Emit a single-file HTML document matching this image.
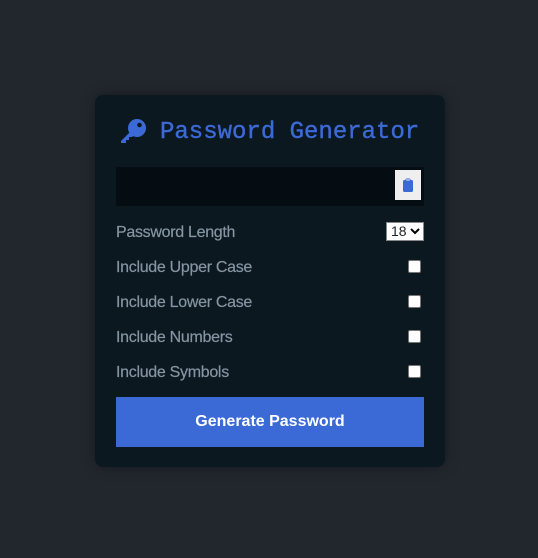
<!DOCTYPE html>
<html><head><meta charset="utf-8"><style>
html,body{margin:0;padding:0;width:538px;height:558px;background:#22272e;overflow:hidden;font-family:"Liberation Sans",sans-serif}
.card{position:absolute;left:95px;top:95px;width:350px;height:372px;background:#0c1820;border-radius:8px;box-shadow:0 0 14px rgba(0,0,0,.35)}
.title{position:absolute;left:160px;top:119px;font-family:"Liberation Mono",monospace;font-size:24px;color:#3b6ad6;white-space:nowrap;-webkit-text-stroke:0.4px #3b6ad6}
.key{position:absolute;left:118px;top:115px}
.inp{position:absolute;left:116px;top:167px;width:308px;height:39px;background:#060d12}
.clip{position:absolute;left:395px;top:170px;width:26px;height:30px;background:#efefef}
.lbl{position:absolute;left:116px;font-size:16px;color:#8595a1;letter-spacing:-0.3px;-webkit-text-stroke:0.2px #8595a1}
.cb{position:absolute;left:408px;width:11px;height:11px;background:#fff;border:1px solid #777;border-radius:2px}
.sel{position:absolute;left:386px;top:222px;width:36px;height:17px;background:#fff;border:1px solid #888;font-size:14px;line-height:17px}
.btn{position:absolute;left:116px;top:397px;width:308px;height:50px;background:#3b6ad6;color:#fff;font-weight:bold;font-size:16px;text-align:center;line-height:50px}
</style></head><body>
<div class="card"></div>
<svg class="key" width="30" height="30" viewBox="0 0 30 30"><circle cx="19" cy="13" r="9" fill="#3b6ad6"/><circle cx="21.5" cy="10" r="2.3" fill="#0c1820"/><path d="M14 15 L3 26 L3 28 L8 28 L8 25 L11 25 L11 22 L14 22 L18 18 Z" fill="#3b6ad6"/></svg>
<div class="title">Password Generator</div>
<div class="inp"></div>
<div class="clip"><svg width="26" height="30" viewBox="0 0 26 30"><rect x="8" y="10" width="10" height="12" rx="1.5" fill="#3b6ad6"/><rect x="10.5" y="8.5" width="5" height="3" rx="1" fill="#3b6ad6"/><rect x="11" y="9.5" width="4" height="1" fill="#efefef"/></svg></div>
<div class="lbl" style="top:224px">Password Length</div>
<div class="sel"><span style="margin-left:4px;color:#222">18</span><svg style="position:absolute;left:23px;top:5px" width="10" height="7" viewBox="0 0 10 7"><path d="M1 1 L5 5 L9 1" stroke="#000" stroke-width="2" fill="none"/></svg></div>
<div class="lbl" style="top:259px">Include Upper Case</div><div class="cb" style="top:260px"></div>
<div class="lbl" style="top:294px">Include Lower Case</div><div class="cb" style="top:295px"></div>
<div class="lbl" style="top:329px">Include Numbers</div><div class="cb" style="top:330px"></div>
<div class="lbl" style="top:364px">Include Symbols</div><div class="cb" style="top:365px"></div>
<div class="btn">Generate Password</div>
</body></html>
